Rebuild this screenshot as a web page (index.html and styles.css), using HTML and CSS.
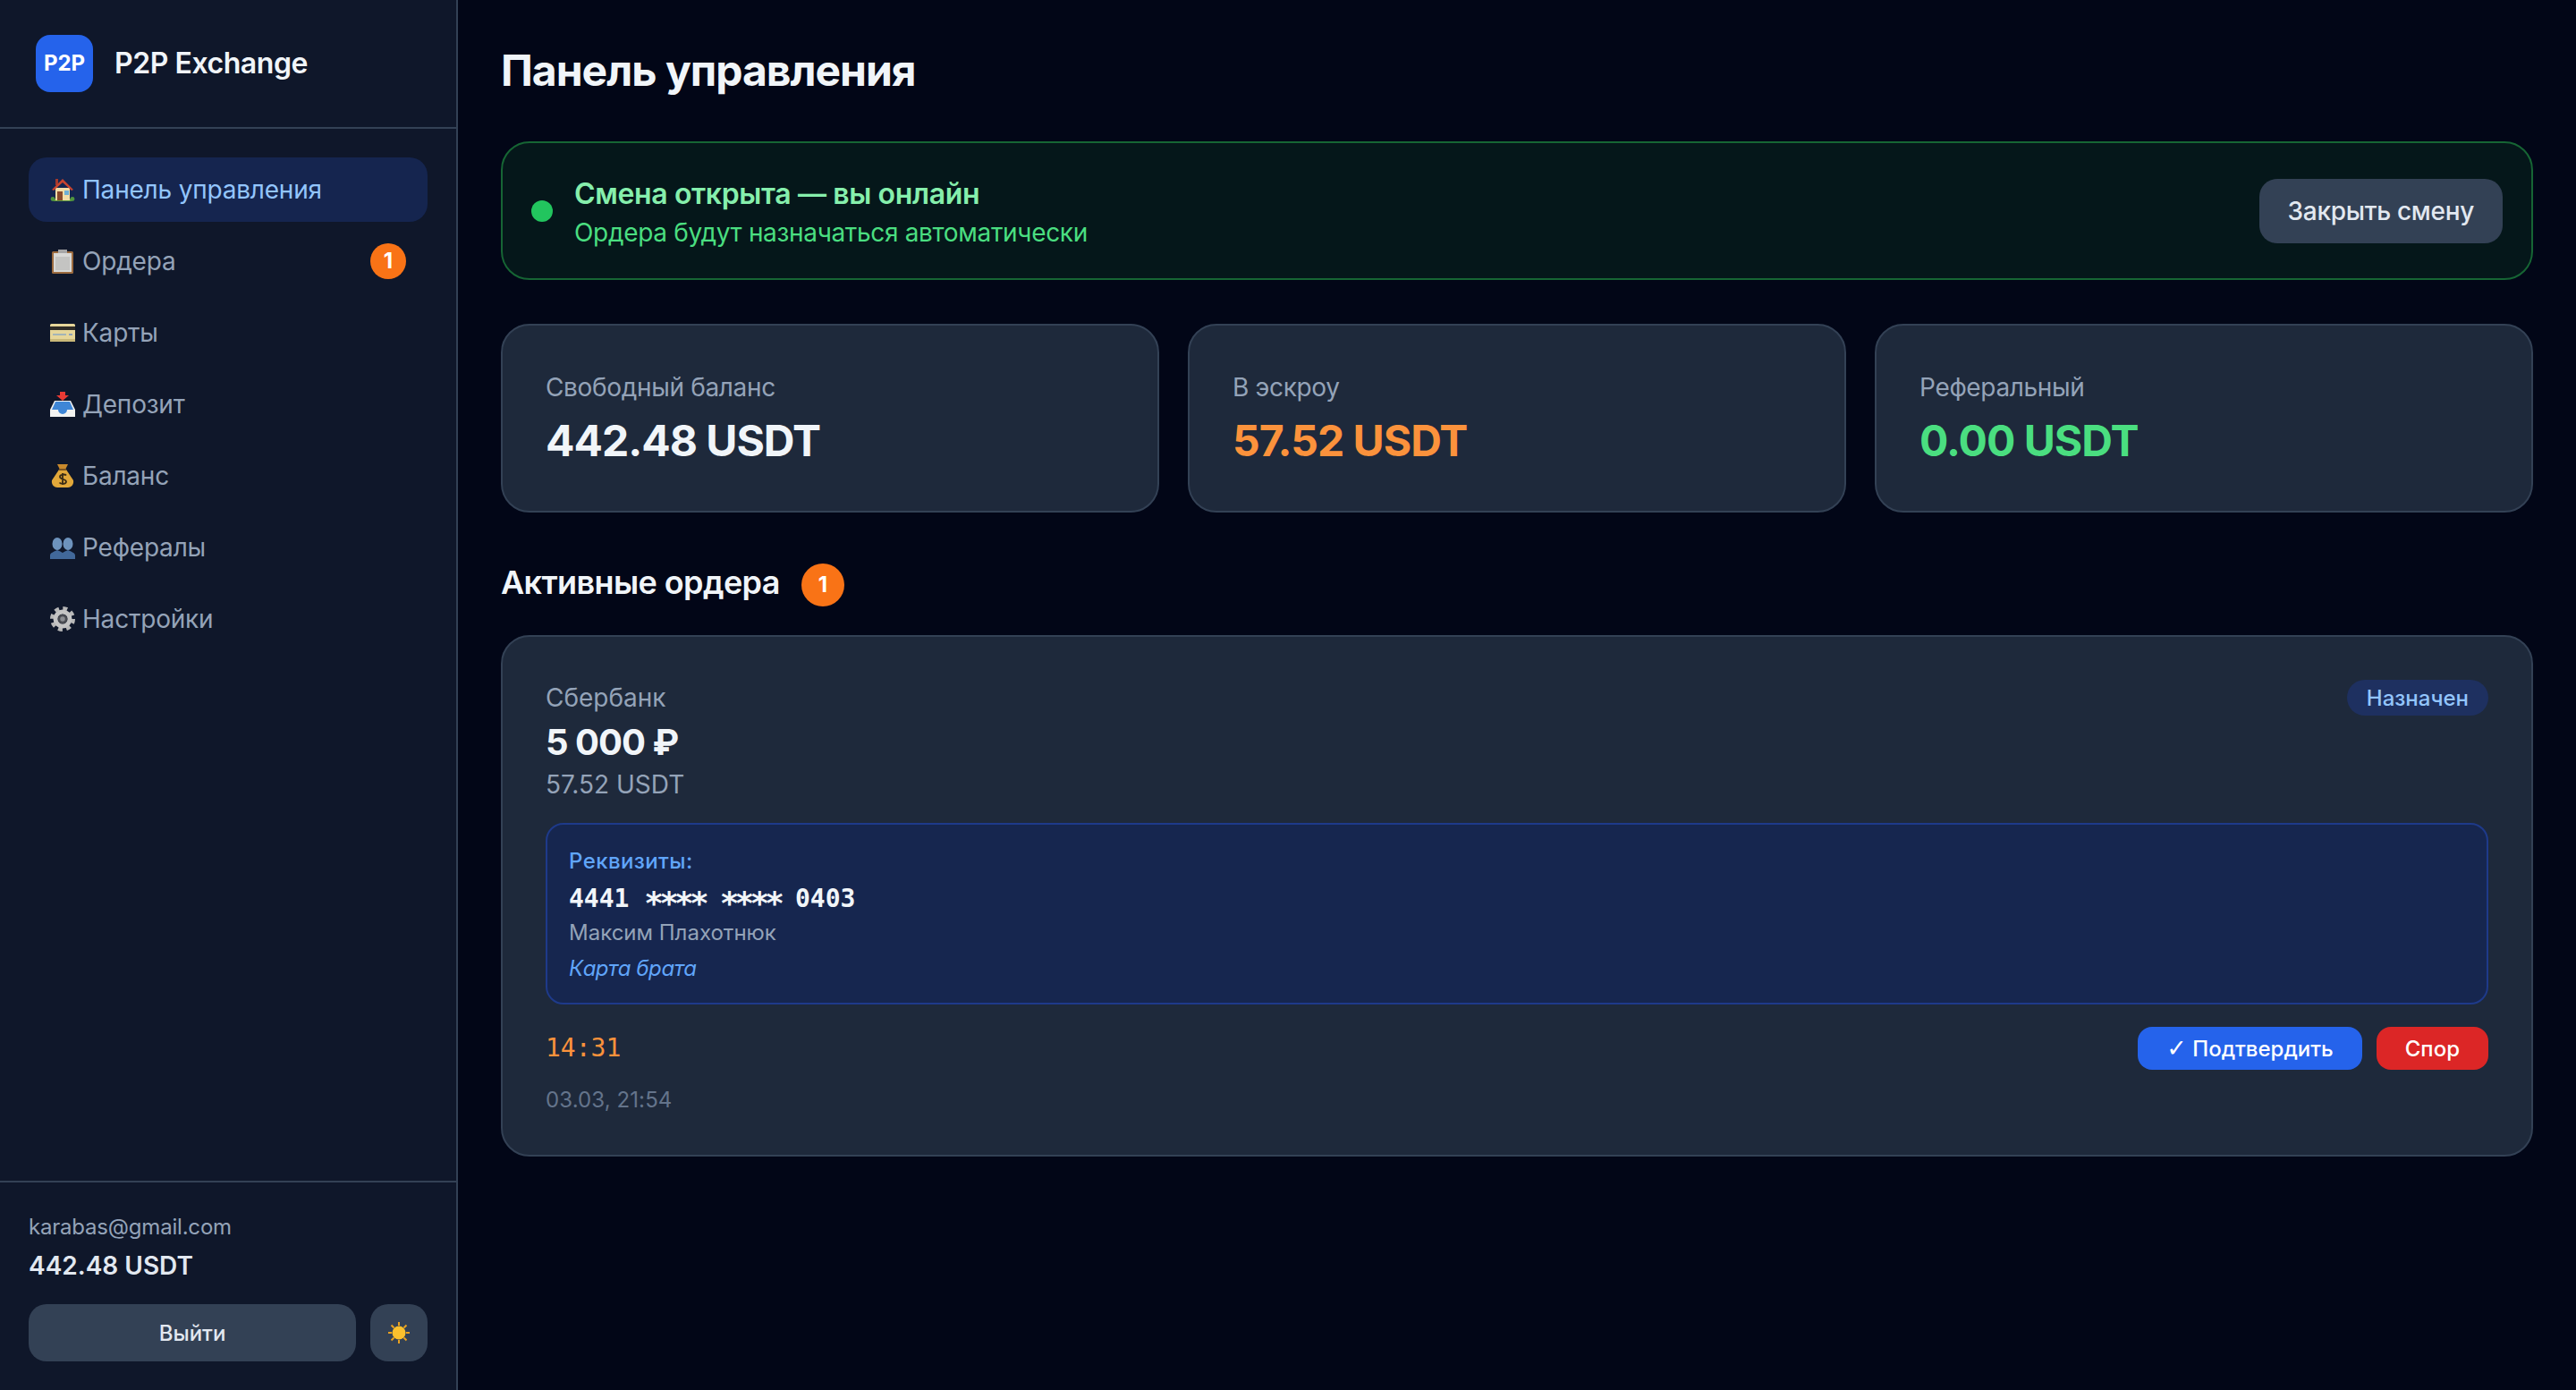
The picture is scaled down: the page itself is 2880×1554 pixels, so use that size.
FILE: index.html
```html
<!DOCTYPE html>
<html lang="ru">
<head>
  <meta charset="UTF-8">
  <title>P2P Exchange</title>
  <link rel="stylesheet" href="styles.css">
</head>
<body>
  <div class="layout">
    <aside class="sidebar">
      <div class="brand">
        <div class="brand-logo">P2P</div>
        <div class="brand-name">P2P Exchange</div>
      </div>
      <nav class="nav">
        <a class="nav-item active">
          <svg class="emoji" viewBox="0 0 28 28"><path d="M4 24h20v3H4z" fill="#5c9a3c"/><path d="M6 12h16v14H6z" fill="#f3dca6"/><path d="M6 2h3v7H6z" fill="#a5392c"/><path d="M14 2 2 14l2 1L14 6l10 9 2-1z" fill="#c9452f"/><path d="M8 16h6v10H8z" fill="#8a4a2b"/><path d="M16 15h5v5h-5z" fill="#6fb0d6"/><circle cx="3" cy="24.500" r="2.400" fill="#4f9440"/><circle cx="25" cy="24.500" r="2.400" fill="#4f9440"/></svg>
          <span>Панель управления</span>
        </a>
        <a class="nav-item">
          <svg class="emoji" viewBox="0 0 28 28"><rect x="2" y="3" width="24" height="25" rx="1.500" fill="#9c6b3f"/><path d="M4 5h20v21H4z" fill="#d8d8d6"/><path d="M9 1h10v4H9z" fill="#a7a7a7"/><path d="M6 9h16v15H6z" fill="#c4c4c2"/></svg>
          <span>Ордера</span>
          <span class="count nav-badge">1</span>
        </a>
        <a class="nav-item">
          <svg class="emoji" viewBox="0 0 28 28"><rect y="4" width="28" height="20" rx="1.500" fill="#e6d69a"/><path d="M0 7h28v4H0z" fill="#2e2b26"/><path d="M3 15h15v2H3z" fill="#a3b4b8"/><path d="M21 15h4v2h-4z" fill="#8fa0b8"/><path d="M0 21h28v3H0z" fill="#c9b878"/></svg>
          <span>Карты</span>
        </a>
        <a class="nav-item">
          <svg class="emoji" viewBox="0 0 28 28"><path d="M5 10h18l5 10v8H0v-8z" fill="#f2f2f0"/><path d="M6 11h16l4 9h-7a5 5 0 0 1-10 0H2z" fill="#3f86d6"/><path d="M11 0h6v4h4l-7 6-7-6h4z" fill="#ea3a34"/></svg>
          <span>Депозит</span>
        </a>
        <a class="nav-item">
          <svg class="emoji" viewBox="0 0 28 28"><path d="M8 1h12l-3 6h-6z" fill="#c8892c"/><path d="M10 7h8l8 12c1 5-3 8-6 8H8c-3 0-7-3-6-8z" fill="#e2a83a"/><path d="M10 6h8v2h-8z" fill="#7d5520"/><path d="M18 13.500c-1-1.500-7-1.500-7 1.500 0 3.500 7 2 7 5.500 0 3-6 3-7.500 1M14 11v13" fill="none" stroke="#3a2c16" stroke-width="1.800"/></svg>
          <span>Баланс</span>
        </a>
        <a class="nav-item">
          <svg class="emoji" viewBox="0 0 28 28"><ellipse cx="8" cy="10" rx="5.500" ry="7" fill="#6d93bd"/><ellipse cx="20" cy="10" rx="5.500" ry="7" fill="#6d93bd"/><path d="M0 27v-4c0-3 4-4 8-6 4 2 8 3 8 6v4z" fill="#41689a"/><path d="M28 27v-4c0-3-4-4-8-6-4 2-8 3-8 6v4z" fill="#41689a"/></svg>
          <span>Рефералы</span>
        </a>
        <a class="nav-item">
          <svg class="emoji" viewBox="0 0 28 28"><circle cx="14" cy="14" r="12" fill="none" stroke="#b8b8b8" stroke-width="4" stroke-dasharray="5 4.420"/><circle cx="14" cy="14" r="8" fill="none" stroke="#c4c4c4" stroke-width="5"/><circle cx="14" cy="14" r="4" fill="#8b8d92" stroke="#4a4c52" stroke-width="2.500"/></svg>
          <span>Настройки</span>
        </a>
      </nav>
      <div class="sidebar-footer">
        <div class="user-email">karabas@gmail.com</div>
        <div class="user-balance">442.48 USDT</div>
        <div class="footer-actions">
          <button class="btn btn-logout">Выйти</button>
          <button class="btn btn-theme">
            <svg class="sun" viewBox="0 0 24 24"><path d="M12 0v4M12 20v4M0 12h4M20 12h4M3.500 3.500l3 3M17.500 17.500l3 3M3.500 20.500l3-3M17.500 6.500l3-3" stroke="#e8a020" stroke-width="2"/><circle cx="12" cy="12" r="7.500" fill="#fbc02d"/></svg>
          </button>
        </div>
      </div>
    </aside>
    <main class="main">
      <h1 class="page-title">Панель управления</h1>
      <section class="shift">
        <span class="shift-dot"></span>
        <div class="shift-text">
          <div class="shift-title">Смена открыта — вы онлайн</div>
          <div class="shift-sub">Ордера будут назначаться автоматически</div>
        </div>
        <button class="btn btn-shift">Закрыть смену</button>
      </section>
      <section class="stats">
        <div class="card stat">
          <div class="stat-label">Свободный баланс</div>
          <div class="stat-value">442.48 USDT</div>
        </div>
        <div class="card stat">
          <div class="stat-label">В эскроу</div>
          <div class="stat-value orange">57.52 USDT</div>
        </div>
        <div class="card stat">
          <div class="stat-label">Реферальный</div>
          <div class="stat-value green">0.00 USDT</div>
        </div>
      </section>
      <div class="section-head">
        <h2 class="section-title">Активные ордера</h2>
        <span class="count count-lg">1</span>
      </div>
      <article class="card order">
        <div class="order-top">
          <div>
            <div class="order-bank">Сбербанк</div>
            <div class="order-amount">5 000 ₽</div>
            <div class="order-usdt">57.52 USDT</div>
          </div>
          <span class="tag">Назначен</span>
        </div>
        <div class="requisites">
          <div class="req-label">Реквизиты:</div>
          <div class="req-card">4441 <span class="stars">****</span> <span class="stars">****</span> 0403</div>
          <div class="req-name">Максим Плахотнюк</div>
          <div class="req-note">Карта брата</div>
        </div>
        <div class="order-actions">
          <span class="timer">14:31</span>
          <div class="action-btns">
            <button class="btn btn-confirm"><span class="check">✓</span> Подтвердить</button>
            <button class="btn btn-dispute">Спор</button>
          </div>
        </div>
        <div class="order-date">03.03, 21:54</div>
      </article>
    </main>
  </div>
</body>
</html>
```
FILE: styles.css
```css
* { box-sizing: border-box; }
html, body { margin: 0; padding: 0; height: 100%; overflow: hidden; }
body { background: #020617; color: #f1f5f9; font-family: Inter, "Noto Sans", sans-serif; font-size: 28px; line-height: 1.5; }
button { font-family: inherit; border: none; cursor: pointer; }

.layout { display: flex; height: 100%; }

/* sidebar */
.sidebar { width: 512px; flex: none; display: flex; flex-direction: column; background: #0f172a; border-right: 2px solid #334155; }
.brand { height: 144px; display: flex; align-items: center; gap: 24px; padding: 0 40px; border-bottom: 2px solid #334155; }
.brand-logo { width: 64px; height: 64px; border-radius: 16px; background: #2563eb; color: #fff; display: flex; align-items: center; justify-content: center; font-size: 24px; font-weight: 700; }
.brand-name { font-size: 32px; font-weight: 600; letter-spacing: -0.45px; color: #f1f5f9; }
.nav { flex: 1; display: flex; flex-direction: column; gap: 8px; padding: 32px; }
.nav-item { height: 72px; display: flex; align-items: center; gap: 8px; padding: 0 24px; border-radius: 20px; color: #94a3b8; font-size: 28px; letter-spacing: -0.2px; }
.nav-item.active { background: #15254f; color: #93c5fd; }
.emoji { width: 28px; height: 28px; flex: none; }
.nav-badge { margin-left: auto; }
.sidebar-footer { padding: 32px; border-top: 2px solid #334155; }
.user-email { font-size: 24px; line-height: 36px; color: #94a3b8; letter-spacing: -0.2px; }
.user-balance { font-size: 28px; line-height: 42px; font-weight: 600; color: #e2e8f0; margin-top: 4px; }
.footer-actions { display: flex; gap: 16px; margin-top: 22px; }
.btn { border-radius: 20px; font-weight: 500; }
.btn-logout { flex: 1; height: 64px; background: #334155; color: #e2e8f0; font-size: 24px; }
.btn-theme { width: 64px; height: 64px; background: #334155; display: flex; align-items: center; justify-content: center; }
.sun { width: 24px; height: 24px; }

/* main */
.main { flex: 1; min-width: 0; padding: 48px; }
.page-title { margin: 0 0 48px; font-size: 48px; line-height: 62px; font-weight: 700; letter-spacing: -1px; color: #f1f5f9; }
.shift { display: flex; align-items: center; gap: 24px; padding: 30px 32px; border: 2px solid #166534; border-radius: 32px; background: #05171a; }
.shift-dot { width: 24px; height: 24px; border-radius: 50%; background: #22c55e; flex: none; }
.shift-text { flex: 1; padding-top: 4px; }
.shift-title { font-size: 32px; line-height: 45px; font-weight: 600; letter-spacing: -0.36px; color: #86efac; }
.shift-sub { font-size: 28px; line-height: 42px; letter-spacing: -0.33px; color: #4ade80; }
.btn-shift { height: 72px; padding: 0 32px; background: #334155; color: #e2e8f0; font-size: 28px; letter-spacing: -0.3px; }

.card { background: #1e293b; border: 2px solid #334155; border-radius: 32px; }
.stats { display: grid; grid-template-columns: repeat(3, 1fr); gap: 32px; margin-top: 49px; }
.stat { padding: 48px; }
.stat-label { font-size: 28px; line-height: 42px; letter-spacing: -0.34px; color: #94a3b8; }
.stat-value { font-size: 48px; line-height: 60px; margin-top: 9px; font-weight: 700; letter-spacing: -1px; color: #f1f5f9; }
.stat-value.orange { color: #fb923c; }
.stat-value.green { color: #4ade80; }

.section-head { display: flex; align-items: center; gap: 24px; height: 48px; margin-top: 57px; }
.section-title { margin: 0 0 6px; font-size: 36px; line-height: 42px; font-weight: 600; letter-spacing: -0.6px; color: #f1f5f9; }
.count { width: 40px; height: 40px; border-radius: 50%; background: #f97316; color: #fff; font-size: 24px; font-weight: 700; letter-spacing: 0; display: flex; align-items: center; justify-content: center; }
.count-lg { width: 48px; height: 48px; }

.order { padding: 48px 48px 46px; margin-top: 32px; }
.order-top { display: flex; justify-content: space-between; align-items: flex-start; }
.order-bank { font-size: 28px; line-height: 40px; color: #94a3b8; }
.order-amount { font-size: 40px; line-height: 60px; font-weight: 700; letter-spacing: -1px; color: #f1f5f9; }
.order-usdt { font-size: 28px; line-height: 35px; color: #94a3b8; }
.tag { height: 40px; padding: 0 22px; border-radius: 20px; background: #1e3060; color: #93c5fd; font-size: 24px; font-weight: 500; line-height: 41px; }
.requisites { margin-top: 25px; padding: 23px 24px 20px; border: 2px solid #1e3a8a; border-radius: 20px; background: #16264f; }
.req-label { font-size: 24px; line-height: 36px; font-weight: 500; letter-spacing: 0.4px; color: #60a5fa; }
.req-card { font-family: "DejaVu Sans Mono", "Liberation Mono", monospace; font-size: 28px; line-height: 40px; margin-top: 4px; font-weight: 700; color: #f1f5f9; }
.stars { font-size: 36px; letter-spacing: -4.8px; vertical-align: -8px; line-height: 0; }
.req-name { font-size: 24px; line-height: 36px; color: #94a3b8; }
.req-note { font-size: 24px; line-height: 36px; font-style: italic; letter-spacing: -0.5px; color: #60a5fa; margin-top: 4px; }
.order-actions { display: flex; justify-content: space-between; align-items: center; margin-top: 25px; }
.timer { font-family: "DejaVu Sans Mono", "Liberation Mono", monospace; font-size: 28px; color: #fb923c; }
.action-btns { display: flex; gap: 16px; }
.btn-confirm, .btn-dispute { height: 48px; padding: 0 32px; border-radius: 16px; color: #fff; font-size: 24px; }
.btn-confirm { background: #2563eb; }
.check { font-family: "DejaVu Sans", sans-serif; font-size: 27px; line-height: 0; font-weight: 400; }
.btn-dispute { background: #dc2626; }
.order-date { font-size: 24px; line-height: 30px; margin-top: 19px; letter-spacing: 0.1px; color: #64748b; }
```
